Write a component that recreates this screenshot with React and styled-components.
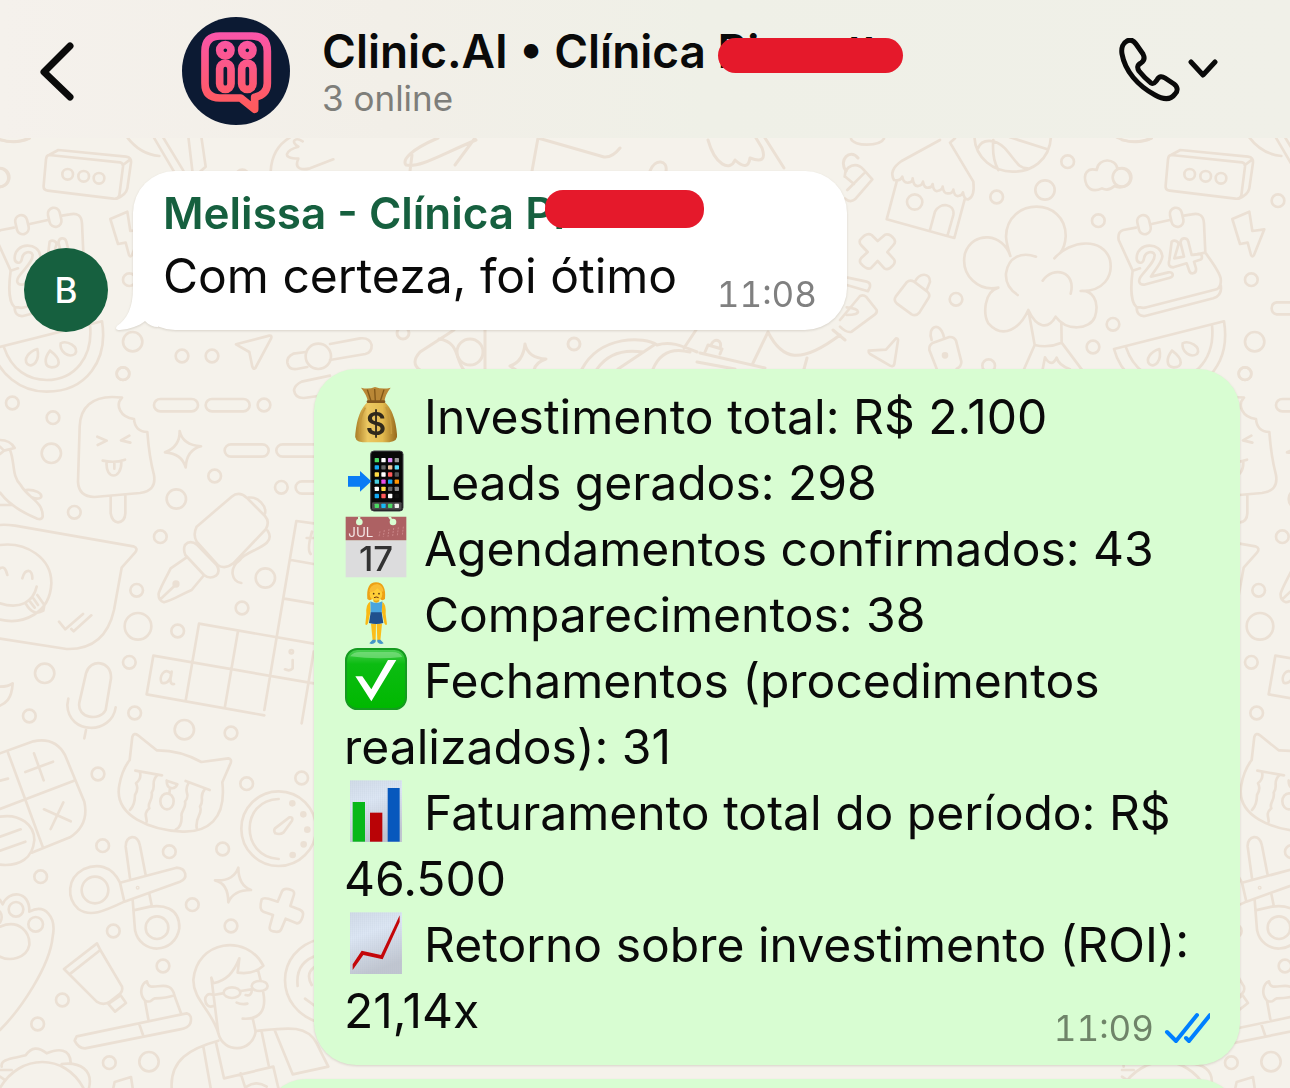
import React from "react";
import styled, { createGlobalStyle } from "styled-components";

const GlobalStyle = createGlobalStyle`
  *, *::before, *::after { box-sizing: border-box; }
  body {
    margin: 0;
    background: #f5f2eb;
    color: #0a0a0a;
    font-family: Inter, Roboto, "Liberation Sans", sans-serif;
  }
  h1, h2, p { margin: 0; }
`;

const Screen = styled.div`
  position: relative;
  display: flex;
  flex-direction: column;
  height: 100vh;
  overflow: hidden;
  background: #f5f2eb;
`;

const WallpaperSvg = styled.svg`
  position: absolute;
  inset: 0;
  width: 100%;
  height: 100%;
  fill: none;
  stroke: #ebe0d4;
  stroke-linecap: round;
  stroke-linejoin: round;
`;

const Header = styled.header`
  position: relative;
  display: flex;
  flex: none;
  align-items: center;
  padding: 17px 72px 13px 40px;
  background: linear-gradient(90deg, #f5f1ec 0%, #f2efe8 30%, #eff0e7 55%, #f0f0e8 100%);
`;

const IconButton = styled.button`
  display: flex;
  padding: 0;
  border: 0;
  background: none;
  color: #0a0a0a;
  cursor: pointer;

  svg {
    fill: none;
    stroke: currentColor;
    stroke-linecap: round;
    stroke-linejoin: round;
  }
`;

const GroupPhoto = styled.svg`
  flex: none;
  width: 108px;
  height: 108px;
  margin: 0 32px 0 106px;
`;

const Heading = styled.div`
  flex: 1;
  min-width: 0;
`;

const Title = styled.h1`
  font-size: 46px;
  font-weight: 600;
  line-height: 54px;
  white-space: nowrap;
`;

const Presence = styled.p`
  color: #7e7e7a;
  font-size: 35px;
  line-height: 40px;
`;

const Hidden = styled.span`
  position: relative;
  display: inline-block;

  &::after {
    content: "";
    position: absolute;
    top: ${(p) => p.$top}px;
    left: ${(p) => p.$left}px;
    width: ${(p) => p.$width}px;
    height: ${(p) => p.$height}px;
    border-radius: 18px;
    background: #e5192b;
  }
`;

const Conversation = styled.main`
  position: relative;
  display: flex;
  flex: 1;
  flex-direction: column;
  padding: 33px 50px 0 24px;
`;

const IncomingRow = styled.div`
  display: flex;
  align-items: flex-end;
  gap: 25px;
  margin-bottom: 37px;
`;

const Initial = styled.div`
  display: grid;
  flex: none;
  place-items: center;
  width: 84px;
  height: 84px;
  border-radius: 50%;
  background: #16603f;
  color: #fff;
  font-size: 35px;
  font-weight: 500;
`;

const Bubble = styled.article`
  position: relative;
  padding: 15px 30px 21px;
  border-radius: 42px;
  background: ${(p) => (p.$sent ? "#d8fdd2" : "#fff")};
  filter: drop-shadow(0 1px 1px rgba(90, 70, 50, 0.18));
`;

const IncomingBubble = styled(Bubble)`
  width: 714px;
  margin-bottom: 2px;
`;

const SentBubble = styled(Bubble)`
  margin: 0 0 14px 290px;
`;

const NextBubble = styled(Bubble)`
  flex: none;
  height: 100px;
  margin-left: 240px;
`;

const Tail = styled.svg`
  position: absolute;
  bottom: 0;
  left: -18px;
  width: 60px;
  height: 42px;
  fill: #fff;
`;

const Sender = styled.h2`
  margin-bottom: 3px;
  color: #16603f;
  font-size: 44px;
  font-weight: 600;
  line-height: 54px;
  white-space: nowrap;
`;

const Line = styled.p`
  font-size: 48px;
  line-height: 66px;
`;

const LastLine = styled.div`
  display: flex;
  align-items: flex-end;
  justify-content: space-between;
`;

const Meta = styled.div`
  display: flex;
  align-items: center;
  gap: 10px;
  color: ${(p) => (p.$sent ? "#6f8469" : "#808080")};
  font-size: 35px;
  font-variant-numeric: tabular-nums;
  line-height: 30px;
`;

const Emoji = styled.svg`
  width: 62px;
  height: 62px;
  margin-right: 18px;
  overflow: visible;
  vertical-align: -12px;
`;

/* ---------- wallpaper ---------- */

const dots = (list) =>
  list.map(([cx, cy, r = 19]) => <circle key={`${cx}-${cy}`} cx={cx} cy={cy} r={r} />);

const Doodles = () => (
  <g id="doodles" strokeWidth="8">
    <g transform="translate(0 130) scale(.33333)">
      {dots([[0, 142, 28], [203, 133, 16], [251, 139, 16], [297, 145, 16], [398, 635, 29], [546, 678], [636, 678], [369, 731], [727, 138]])}
      <path d="M0 30 Q50 42 88 24M147 75 L360 97 Q370 100 369 110 L358 196 Q355 208 340 206 L143 182 Q129 180 131 166 L138 88 Q139 76 147 75 L175 60 L378 80 Q395 82 393 98 L382 175 Q378 195 350 206M369 105 L391 88" />
      <path d="M380 20 C410 60 440 75 478 78M460 20 L522 125M485 15 L550 122M565 20 L577 122M604 20 L617 110 L600 125M812 125 Q815 55 870 22M908 34 C885 20 870 35 895 50 C860 60 840 85 895 86 C880 120 910 120 930 115 L1000 88" />
      <path d="M-24 657 L306 574 C325 690 260 785 140 785 C60 785 -5 730 -24 657M12 652 C35 720 85 750 140 750 C225 750 280 680 270 585" />
      <path d="M112 657 C85 665 70 688 82 702 C100 716 120 690 112 657M150 662 C132 685 132 710 155 712 C180 712 188 690 150 662M182 640 C178 665 205 685 225 672 C240 650 200 630 182 640" />
      <path d="M708 643 L808 617 Q817 616 813 626 L766 714 Q760 720 757 710 L748 666 Z" />
      <path d="M918 666 L880 671 Q860 680 862 698 Q866 720 890 717 L922 711M990 642 L1080 625 Q1110 622 1115 645 Q1116 667 1096 672 L990 690M990 737 L905 755 Q885 765 882 780 Q885 805 912 804 L1010 790" />
      <circle cx="955" cy="679" r="38" />
    </g>
    <g transform="translate(0 330) scale(.33333)">
      {dots([[37, 219], [159, 263], [154, 370, 29], [792, 225], [644, 438], [844, 472], [529, 507, 29], [223, 547], [481, 620], [796, 744, 29], [410, 781], [726, 834], [414, 889, 40], [533, 903], [388, 997], [134, 1030, 29]])}
      <path d="M366 203 C270 190 240 240 239 290 L234 455 Q236 500 283 501 L420 489 Q470 483 462 435 C450 390 446 360 442 306 Q405 305 402 267 C360 262 345 225 366 203M332 500 L332 550 Q336 575 354 577 Q375 574 376 550 L376 495M292 320 L320 332 L293 345M388 317 L363 331 L391 338M308 392 Q345 400 375 389M320 396 C315 450 365 450 364 396M343 400 V416" />
      <rect x="462" y="207" width="132" height="37" rx="19" />
      <rect x="617" y="207" width="132" height="37" rx="19" />
      <rect x="674" y="343" width="132" height="37" rx="19" />
      <rect x="829" y="343" width="132" height="37" rx="19" />
      <rect x="887" y="454" width="132" height="37" rx="19" />
      <path d="M539 303 Q548 345 603 349 Q560 360 557 412 Q545 370 495 367 Q540 350 539 303Z" />
      <path d="M0 330 Q30 330 44 354 L12 362M0 350 L12 362 L0 372M30 360 C45 395 35 440 62 465 C85 505 130 515 128 560 Q124 570 112 566 C60 545 20 515 0 488M78 480 C105 478 128 490 123 502 Q115 510 95 502M0 525 H38" />
      <path d="M0 585 Q15 583 45 587 L400 649 Q416 655 405 668 L365 713 L342 840 Q315 960 200 957 L0 926M0 645 C80 635 155 685 154 760 C150 850 70 885 0 869M0 820 C60 840 100 815 110 770M0 715 Q15 705 22 735M67 745 C75 715 98 715 97 746M78 822 Q100 860 130 842 L133 825 L112 795M90 815 L104 833M100 805 L114 825M177 875 L196 898 L249 852M214 897 L221 904 L274 856" />
      <path d="M590 590 L695 500 Q717 482 740 503 L795 558 Q810 575 798 597 L700 700 Q675 720 653 705 L590 635 Q578 615 590 590M555 645 Q570 628 592 645 L650 705 Q662 725 648 737 Q630 749 612 735 L556 675 Q549 658 555 645M560 682 L512 715 C495 750 485 765 476 790 Q474 812 492 817 C520 810 540 795 575 780 L610 738M482 807 L523 768M745 503 C775 498 800 530 795 550M803 602 C835 650 735 660 720 690 C685 715 695 755 724 759" />
      <circle cx="528" cy="762" r="7" fill="#ebe0d4" />
      <path d="M941 580 L889 573 L793 1140M873 690 L941 702M853 806 L941 821M597 881 L941 941M460 977 L941 1060M597 881 L557 1112M714 903 L674 1135M460 977 L440 1093 L793 1156M941 965 L905 1180M512 1030 C495 1010 475 1040 485 1058 C505 1065 515 1040 515 1025 Q505 1065 522 1062M878 990 V1015 Q870 1025 855 1018M936 605 Q920 660 932 672M920 624 H941" />
      <circle cx="874" cy="965" r="5" />
      <path d="M0 1070 Q25 1070 38 1060 C35 1110 15 1120 0 1127M258 1030 C270 985 335 990 333 1045 L317 1140 C300 1175 230 1165 238 1118 L258 1030M205 1106 L202 1125 C205 1215 335 1215 347 1132M258 1200 L253 1225" />
    </g>
    <g transform="translate(0 700) scale(.33333)">
      {dots([[88, 48], [404, 39], [553, 89, 29], [693, 99], [294, 222], [740, 251], [905, 234], [308, 437], [508, 455], [668, 447], [122, 530], [577, 614], [340, 693], [693, 678], [489, 798], [187, 900], [113, 972], [328, 1088], [447, 1085, 29]])}
      <path d="M0 160 L100 124 Q165 110 195 165 L253 305 Q268 375 210 412 L95 458M24 158 L128 440M0 327 L220 243M102 160 L131 241M76 216 L159 185M132 328 L212 364M190 307 L152 387M0 242 L24 236M0 410 L62 388M0 452 L76 425M0 350 C60 340 103 375 103 420 C98 475 60 500 0 494" />
      <path d="M389 180 L397 110 Q402 97 414 106 L470 151 Q540 150 604 186 L685 175 Q696 177 692 189 L667 247 C680 360 620 397 548 395 C455 390 340 350 358 255 Q366 210 389 180M406 212 L486 226M557 243 L629 270M420 218 Q425 235 408 250 Q417 265 405 285 Q405 315 390 330M472 226 C450 245 470 260 455 278 C460 300 440 310 448 325 C430 340 440 350 440 365M565 250 C548 280 575 280 555 305 C560 325 540 335 545 350 Q545 380 528 388M614 268 C595 290 615 300 600 320 C610 340 585 350 590 384M500 242 L532 253 C525 270 500 270 500 242M510 265 L508 280" />
      <ellipse cx="501" cy="304" rx="20" ry="24" />
      <circle cx="836" cy="386" r="112" />
      <path d="M836 297 C720 300 720 470 836 477M825 385 L868 352 Q880 350 876 362 L850 398 Q840 405 826 400 Q820 392 825 385" />
      {[[877, 310], [910, 343], [922, 389], [911, 433], [878, 465]].map(([x, y]) => <circle key={y} cx={x} cy={y} r="6" fill="#ebe0d4" />)}
      <path d="M360 548 C335 495 290 490 250 508 C200 535 200 595 235 627 C270 652 310 635 373 605 L360 548 L530 503 C560 505 565 535 540 545 L373 605M390 535 L377 440 C375 405 415 400 420 437 L437 525M398 600 L405 690 C420 765 525 765 538 685 C540 620 485 615 450 620 L400 631M448 582 L456 620" />
      <circle cx="285" cy="570" r="40" /><circle cx="471" cy="683" r="34" /><circle cx="413" cy="563" r="2" />
      <path d="M715 503 Q715 555 753 570 Q700 570 685 607 Q685 550 645 541 Q700 545 715 503Z" />
      <path d="M785 598 Q792 590 820 601 L833 605 L846 574 Q852 562 874 570 Q887 574 880 590 L871 618 L900 629 Q913 635 908 650 Q902 671 890 670 L857 656 L845 685 Q840 700 820 694 Q805 692 810 677 L819 645 L790 635 Q776 630 785 598" />
      <path d="M0 600 L8 613 C25 570 90 570 88 635 C135 610 170 650 158 710 C150 800 60 930 0 990M0 680 C60 655 90 700 88 735 C80 775 30 785 0 770M0 635 Q10 650 0 668" />
      <circle cx="48" cy="628" r="22" /><circle cx="107" cy="673" r="22" />
      <path d="M192 807 L291 730 L301 750 L366 860 Q370 875 355 885 L330 905 Q310 918 290 905 L192 807M212 820 L301 750M362 886 L378 909 L345 935 L325 912 Z" />
      <path d="M230 1009 L560 940 Q578 945 571 970 Q565 985 540 988 L255 1045 Q235 1045 224 1022 L230 1009M417 970 L429 1005M445 958 L435 902 C415 880 425 850 441 844 C445 875 480 850 505 860 Q520 867 523 886 L543 940M435 902 C455 910 450 900 465 895 Q500 895 523 886" />
      <path d="M655 1000 C635 930 580 900 580 840 C590 720 740 700 790 797 Q760 825 713 818 L718 775 C700 820 680 840 640 850 L634 833 L655 1000 C670 1060 755 1060 767 995 L758 955M640 918 C610 930 605 870 640 885 L668 880M774 810 L782 842M790 878 C800 930 780 960 728 956M710 908 Q725 915 742 911M722 873 L754 868M737 885 Q755 890 756 868" />
      <ellipse cx="696" cy="878" rx="25" ry="16" /><ellipse cx="779" cy="858" rx="24" ry="15" />
      <path d="M655 1022 C570 1045 510 1080 515 1164M767 993 C850 985 920 970 950 1030 L985 1100 L878 1123 L825 993M610 1040 L632 1164M648 1028 L672 1135 L820 1100M785 995 L806 1096M722 1120 L738 1170M820 1100 L835 1164M740 1160 Q770 1140 800 1160M340 1164 L344 1146 L393 1131 L398 1164" />
      <path d="M960 717 C820 750 820 930 960 968M955 765 Q885 785 893 858M945 800 Q915 820 935 855M915 896 L945 918" />
      <path d="M5 1100 C0 1075 45 1075 77 1066 C95 1040 115 1040 140 1060 C175 1045 210 1045 212 1087M0 1164 C60 1060 195 1060 250 1164M185 1092 C240 1085 280 1110 267 1164M0 1110 H35 M0 1130 L12 1138" />
    </g>
    <g transform="translate(840 130) scale(.33333)">
      {dots([[683, 95], [470, 201], [615, 180, 29], [775, 272], [224, 216, 23], [348, 508], [819, 583], [759, 651], [446, 707], [1314, 212], [1234, 449], [1215, 731]])}
      <path d="M33 26 C40 50 120 50 132 26M14 140 C15 105 50 95 70 118 L97 148 L45 208 Q30 220 15 205M72 130 L22 180M16 140 L42 162" />
      <path d="M300 30 L185 93 Q145 120 162 150 Q180 155 187 140 Q190 160 205 158 Q218 158 218 145 Q220 170 235 168 Q247 165 249 155 Q252 175 265 173 Q277 172 278 162 Q280 185 292 183 Q307 180 308 170 Q310 192 325 190 Q338 190 340 179 Q343 200 355 198 Q367 197 369 187 Q372 210 385 208 Q405 200 400 155 L330 38 L345 25M170 155 L140 268 L343 324 L374 208M270 300 L285 245 C300 215 345 220 340 255 L323 315" />
      <path d="M403 20 C410 155 625 165 633 20M414 55 C425 25 465 25 495 55 C530 95 535 115 563 115M460 30 Q455 85 475 120M510 22 L620 57M830 22 Q885 48 935 25" />
      <path d="M740 165 C725 130 745 112 770 120 C775 80 830 85 832 117 C870 105 885 155 855 168 Q840 176 823 168 Q805 185 786 175 Q755 190 740 165" />
      <path d="M511 378 C505 360 500 345 498 320 C500 200 680 200 677 320 Q675 350 662 367M511 378 C490 310 400 300 375 370 C360 440 420 485 475 473 C430 485 430 555 445 580 C490 630 540 595 565 540 C590 595 625 600 647 560 C680 605 750 600 765 560 C780 510 755 480 722 483 C790 485 820 440 810 390 C790 320 690 330 643 385M588 380 C545 365 505 380 498 430 Q495 470 533 495M608 452 C640 405 710 425 692 491M565 540 L584 645 Q625 655 665 638 L664 578M584 645 L552 718M665 638 L725 718M608 718 L615 682 Q635 715 650 683 Q655 705 690 718" />
      <path d="M60 330 Q80 305 95 315 L113 333 L135 314 Q150 310 163 328 Q168 338 160 345 L142 366 L162 388 Q168 398 158 407 Q145 422 133 415 L113 393 L92 415 Q80 420 62 400 Q57 392 63 385 L83 366 L63 345 Q57 338 60 330" />
      <path d="M200 457 Q210 448 222 455 L262 485 Q272 495 265 505 L238 548 Q228 560 215 553 L170 520 Q160 510 167 500ZM225 455 C240 425 270 430 270 455 L260 480M23 443 L80 455 Q92 458 90 470 L84 484 L20 465M0 570 L60 498 Q70 493 78 500 L110 540 Q112 548 105 553 L35 605 Q20 610 0 590M20 532 C60 535 70 555 20 555" />
      <path d="M86 662 L138 659 L168 625 Q175 625 174 632 L163 702 Q160 712 150 707 L90 672 Q85 668 86 662M290 716 L268 660 Q266 645 280 638 L328 621 Q342 620 348 632 L364 695 Q364 710 350 716M275 630 C260 590 300 570 312 622" />
      <circle cx="315" cy="676" r="6" fill="#ebe0d4" />
      <path d="M888 293 L850 300 Q832 305 836 330 L878 422 C870 480 875 520 890 532 L900 532 Q910 535 920 532 L1130 478 Q1145 470 1142 445 Q1138 425 1096 368 L1092 280 Q1090 245 1055 253 L1032 257M935 282 L990 270M890 532 Q890 560 915 558 L1120 505 Q1148 495 1142 465M878 422 L900 415M1060 375 L1096 368" />
      <rect x="894" y="255" width="36" height="58" rx="18" transform="rotate(-13 912 284)" />
      <rect x="992" y="233" width="36" height="58" rx="18" transform="rotate(-13 1010 262)" />
      <path d="M890 385 C890 335 965 335 967 380 C965 400 940 425 933 440 L985 427 C1000 425 1003 440 990 443 L912 464 C895 465 895 450 902 440 C920 415 945 395 944 375 C940 360 915 365 912 385 C910 405 890 400 890 385M995 335 C1005 328 1018 335 1015 345 L1003 385 L1032 380 L1022 340 C1020 322 1042 320 1045 335 L1055 375 L1075 372 C1090 372 1088 388 1078 390 L1062 395 L1068 415 C1070 433 1050 435 1047 420 L1040 400 L1000 412 Q982 412 988 390 Z" />
      <path d="M1177 267 L1228 245 L1237 303 L1273 298 L1242 375 Q1238 383 1233 375 L1223 338 L1200 342 Q1190 310 1177 267" />
      <path d="M1360 517 H1310 C1290 520 1290 550 1310 553 H1360" />
    </g>
    <g strokeWidth="3">
      <circle cx="403" cy="333" r="6" /><circle cx="574" cy="344" r="6" /><circle cx="470" cy="352" r="13" />
      <path d="M454 330 L420 352 Q410 363 420 370M439 339 C460 342 455 360 464 370M485 330 V370M525 344 Q528 358 546 359 Q536 362 534 370M525 344 Q523 362 510 366 L516 370M582 369 C600 335 645 336 657 345 C670 341 680 345 697 352M597 369 C610 350 630 350 643 352M618 369 L654 345M653 369 Q663 345 690 352M696 330 L684 348M700 353 L765 368M697 362 L735 369M705 352 L708 345 L722 349 L720 354M711 345 C714 337 723 340 720 348M768 332 L753 363M768 332 C782 360 800 365 840 335M807 358 L804 369M833 330 L845 340" />
      <path d="M438 138 C410 150 402 160 406 165 C420 168 440 155 476 140M410 171 L412 155M475 138 L455 165M532 171 L538 138M538 138 L604 157 Q612 158 620 148M650 171 C655 158 668 160 666 171M708 140 C715 165 730 172 735 160 Q748 172 750 158 Q768 165 762 148 L756 138M765 138 L784 168M846 171 C838 160 850 148 858 158" />
    </g>
  </g>
);

const Wallpaper = () => (
  <WallpaperSvg aria-hidden="true">
    <Doodles />
    <use href="#doodles" x="1122" />
    <use href="#doodles" x="-1122" />
  </WallpaperSvg>
);

/* ---------- header drawings ---------- */

const ClinicLogo = () => (
  <GroupPhoto viewBox="546 51 324 324" role="img" aria-label="Clinic.AI">
    <defs>
      <linearGradient id="pink" gradientUnits="userSpaceOnUse" x1="0" y1="96" x2="0" y2="340">
        <stop offset="0" stopColor="#f955ab" />
        <stop offset="0.8" stopColor="#ff5a66" />
        <stop offset="1" stopColor="#ff5a5a" />
      </linearGradient>
    </defs>
    <circle cx="708" cy="213" r="162" fill="#0c1a33" />
    <g fill="none" stroke="url(#pink)" strokeWidth="23" strokeLinejoin="round">
      <path d="M660 108 H756 Q802 108 802 154 V250 Q802 284 764 292 V328 L722 294 H660 Q615 294 615 250 V154 Q615 108 660 108Z" />
      <circle cx="676" cy="151" r="17" />
      <circle cx="742" cy="151" r="17" />
      <rect x="659" y="189" width="34" height="79" rx="17" />
      <rect x="725" y="189" width="34" height="79" rx="17" />
    </g>
  </GroupPhoto>
);

const ReadTicks = () => (
  <svg width="46" height="32" viewBox="0 0 46 32" fill="none" stroke="#007fff" strokeWidth="4" strokeLinecap="round" strokeLinejoin="round" role="img" aria-label="Lida">
    <path d="M3 20 L12 29 L33 3M22 26 L25 29 L46 3" />
  </svg>
);

/* ---------- emoji ---------- */

const MoneyBag = () => (
  <Emoji viewBox="42 45 186 186" role="img" aria-label="Dinheiro">
    <defs>
      <linearGradient id="bag" x1="0" x2="1"><stop offset="0" stopColor="#a97c25" /><stop offset=".3" stopColor="#ecc862" /><stop offset=".65" stopColor="#e3bb50" /><stop offset="1" stopColor="#96681b" /></linearGradient>
    </defs>
    <path d="M93 56 Q115 62 135 54 Q158 62 182 56 Q166 76 163 98 H114 Q110 77 93 56Z" fill="#b98736" />
    <path d="M112 62 L123 96M134 60 L136 96M162 62 L151 96" stroke="#805718" strokeWidth="4" />
    <path d="M114 98 H163 Q195 125 201 196 Q205 216 178 220 H98 Q71 217 76 195 Q82 125 114 98Z" fill="url(#bag)" />
    <path d="M106 116 Q86 150 90 195M168 114 Q185 150 184 195" stroke="#c59a3d" strokeWidth="5" fill="none" />
    <rect x="110" y="94" width="56" height="8" rx="4" fill="#81551d" />
    <text x="138" y="199" fontSize="94" fontWeight="600" textAnchor="middle" fill="#30291c">$</text>
  </Emoji>
);

const appColors = ["#4bd964", "#fff", "#dc8cf5", "#999", "#13a9f5", "#666", "#efc29d", "#5ae0ff", "#ffdc45", "#fff", "#ff5a5a", "#555", "#48cfe0", "#e94ee9", "#13a9f5", "#ff9500", "#fff", "#ffdc45", "#666", "#888", "#13a9f5", "#ff5a5a", "#fff", "#111"];
const dockColors = ["#4bd964", "#18b9f5", "#4bd964", "#eee"];

const Phone = () => (
  <Emoji viewBox="42 243 186 186" role="img" aria-label="Celular">
    <rect x="122" y="246" width="97" height="180" rx="10" fill="#080808" stroke="#45454a" strokeWidth="3" />
    <rect x="126" y="400" width="89" height="22" rx="3" fill="#4a4a4c" />
    {appColors.map((c, i) => <rect key={i} x={134 + (i % 4) * 20} y={267 + Math.floor(i / 4) * 21.5} width="13" height="13" rx="2" fill={c} />)}
    {dockColors.map((c, i) => <rect key={i} x={134 + i * 20} y="404" width="13" height="13" rx="2" fill={c} />)}
    <path d="M54 321 H90 V306 L124 337 L90 368 V353 H54Z" fill="#0a7cf5" />
  </Emoji>
);

const Calendar = () => (
  <Emoji viewBox="42 441 186 186" role="img" aria-label="Calendário">
    <path d="M47 514 H229 V625 H47Z" fill="#dcdcdd" />
    <path d="M47 443 H229 V514 H47Z" fill="#ad6163" />
    <path d="M84 443 H91 V452 H84ZM174 443 H183 L187 452 H180Z" fill="#d8fdd2" />
    <circle cx="88" cy="459" r="10" fill="#d8fdd2" /><circle cx="189" cy="459" r="10" fill="#d8fdd2" />
    <path d="M150 487 L147 503M163 483 L160 503M177 480 L174 503M191 477 L188 501M205 475 L202 500M220 473 L217 499" stroke="#c98587" strokeWidth="3" strokeDasharray="6 3" />
    <text x="55" y="503" fontSize="40" fill="#f5e6e6">JUL</text>
    <text x="138" y="607" fontSize="104" fontWeight="500" textAnchor="middle" fill="#333">17</text>
  </Emoji>
);

const Woman = () => (
  <Emoji viewBox="42 639 186 186" role="img" aria-label="Mulher em pé">
    <path d="M123 764 L128 815H137L138 764ZM140 764 L142 815H151L156 764Z" fill="#fbbd1b" />
    <path d="M128 812 H137 V819 Q128 829 118 823ZM142 812 H151 L161 823 Q150 829 142 819Z" fill="#4596c9" />
    <path d="M120 698 Q107 705 109 735 L106 766 Q110 771 114 763 L122 725ZM157 698 Q169 705 167 735 L171 766 Q167 771 163 763 L155 725Z" fill="#f9b916" />
    <path d="M121 697 Q139 706 157 697 L155 733 H122Z" fill="#49a5df" />
    <path d="M122 730 H155 L160 762 Q139 768 117 762Z" fill="#20508d" />
    <path d="M130 685 H148 V697 Q139 705 130 697Z" fill="#edaa10" />
    <path d="M112 690 Q108 640 138 640 Q169 640 165 690 Q157 697 150 690 H127 Q119 697 112 690Z" fill="#eda116" />
    <ellipse cx="138" cy="675" rx="19" ry="20" fill="#ffcf38" />
    <path d="M118 670 Q118 647 142 645 Q160 650 160 668 Q148 667 142 658 Q132 670 118 670Z" fill="#f9bd35" />
    <circle cx="131" cy="674" r="2.5" fill="#543310" /><circle cx="147" cy="674" r="2.5" fill="#543310" />
    <path d="M132 686 Q139 682 146 686" stroke="#6b3510" strokeWidth="3" fill="none" />
  </Emoji>
);

const Check = () => (
  <Emoji viewBox="42 837 186 186" role="img" aria-label="Concluído">
    <defs>
      <linearGradient id="check" x1="0" y1="0" x2="0" y2="1"><stop offset="0" stopColor="#4ed055" /><stop offset=".25" stopColor="#0cbc12" /><stop offset="1" stopColor="#00b800" /></linearGradient>
    </defs>
    <rect x="48" y="840" width="180" height="180" rx="34" fill="url(#check)" stroke="#159b20" strokeWidth="6" />
    <path d="M60 862 Q70 849 90 849 H187 Q210 849 217 864 Q140 872 60 862Z" fill="#93e597" opacity=".55" />
    <path d="M76 922 H97 L124 961 L174 873 H199 L124 997Z" fill="#fff" />
  </Emoji>
);

const ChartPaper = ({ id }) => (
  <>
    <defs>
      <linearGradient id={`${id}-paper`} x1="0" y1="0" x2=".3" y2="1"><stop offset="0" stopColor="#d3dde8" /><stop offset=".4" stopColor="#dfe9f6" /><stop offset="1" stopColor="#c2c7d0" /></linearGradient>
      <pattern id={`${id}-grid`} width="6" height="6" patternUnits="userSpaceOnUse"><path d="M0 0H6M0 0V6" stroke="#aab6c6" strokeWidth="1" opacity=".7" /></pattern>
    </defs>
    <rect x="60" y="215" width="156" height="185" fill={`url(#${id}-paper)`} />
    <rect x="60" y="215" width="156" height="185" fill={`url(#${id}-grid)`} />
  </>
);

const BarChart = () => (
  <Emoji viewBox="42 214 186 186" role="img" aria-label="Gráfico de barras">
    <ChartPaper id="bars" />
    <path d="M68 280 H105 V399 H68Z" fill="#08b81a" />
    <path d="M120 312 H157 V399 H120Z" fill="#b90306" />
    <path d="M173 238 H209 V399 H173Z" fill="#0758bd" />
  </Emoji>
);

const LineChart = () => (
  <Emoji viewBox="42 214 186 186" role="img" aria-label="Gráfico em alta">
    <ChartPaper id="line" />
    <path d="M68 371 L95 330 L153 343 L209 224 V244 L158 356 L100 343 L68 388Z" fill="#c40609" />
  </Emoji>
);

export default function App() {
  return (
    <Screen>
      <GlobalStyle />
      <Wallpaper />
      <Header>
        <IconButton type="button" aria-label="Voltar">
          <svg width="36" height="60" viewBox="0 0 36 60" strokeWidth="7">
            <path d="M30 5 L4 31 L30 56" />
          </svg>
        </IconButton>
        <ClinicLogo />
        <Heading>
          <Title>
            Clinic.AI • Clínica{" "}
            <Hidden $top={14} $left={0} $width={185} $height={35}>Pi......tt</Hidden>
          </Title>
          <Presence>3 online</Presence>
        </Heading>
        <IconButton type="button" aria-label="Ligar">
          <svg width="100" height="66" viewBox="1118 38 100 66" strokeWidth="5">
            <path d="M1127 41 C1131 39 1134 41 1136 44 L1143 54 C1145 58 1144 61 1141 63 C1137 65 1137 68 1139 71 C1143 76 1147 80 1151 83 C1154 85 1155 82 1157 80 C1159 76 1162 76 1165 78 L1174 84 C1178 87 1178 91 1175 94 C1170 101 1162 99 1155 95 C1138 86 1125 71 1122 54 C1121 48 1123 43 1127 41Z" />
            <path d="M1191 62 L1203 75 L1215 62" />
          </svg>
        </IconButton>
      </Header>
      <Conversation>
        <IncomingRow>
          <Initial>B</Initial>
          <IncomingBubble>
            <Tail viewBox="0 0 60 42" aria-hidden="true">
              <path d="M18 0 C18 20 12 31 2 38 Q-1 42 5 42 C15 41 24 38 30 33 C34 37 38 39 43 39 V0Z" />
            </Tail>
            <Sender>
              Melissa - Clínica{" "}
              <Hidden $top={4} $left={20} $width={159} $height={38}>Pi</Hidden>
            </Sender>
            <LastLine>
              <Line>Com certeza, foi ótimo</Line>
              <Meta><time>11:08</time></Meta>
            </LastLine>
          </IncomingBubble>
        </IncomingRow>
        <SentBubble $sent>
          <Line><MoneyBag />Investimento total: R$ 2.100</Line>
          <Line><Phone />Leads gerados: 298</Line>
          <Line><Calendar />Agendamentos confirmados: 43</Line>
          <Line><Woman />Comparecimentos: 38</Line>
          <Line><Check />Fechamentos (procedimentos realizados): 31</Line>
          <Line><BarChart />Faturamento total do período: R$ 46.500</Line>
          <Line><LineChart />Retorno sobre investimento (ROI):</Line>
          <LastLine>
            <Line>21,14x</Line>
            <Meta $sent><time>11:09</time><ReadTicks /></Meta>
          </LastLine>
        </SentBubble>
        <NextBubble $sent aria-hidden="true" />
      </Conversation>
    </Screen>
  );
}
